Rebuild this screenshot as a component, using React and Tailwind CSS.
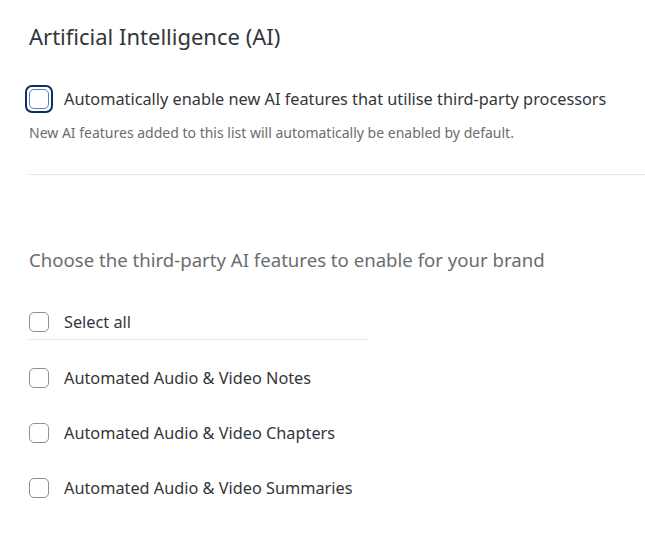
import React from "react";

const Box = ({ focused }) =>
  focused ? (
    <span className="flex h-[28px] w-[28px] shrink-0 items-center justify-center rounded-[7px] border-2 border-[#0b2f61] bg-white">
      <span className="block h-[20px] w-[20px] rounded-[5px] border border-[#5b7fb0] bg-white" />
    </span>
  ) : (
    <span className="block h-[20px] w-[20px] shrink-0 rounded-[5px] border border-[#89919a] bg-white" />
  );

const Option = ({ label, focused, className = "" }) => (
  <label className={`flex items-center ${className}`}>
    <span className={`flex w-[35px] items-center ${focused ? "-ml-[4px] w-[39px]" : ""}`}>
      <Box focused={focused} />
    </span>
    <span className="text-[16.3px] text-[#32363a]">{label}</span>
  </label>
);

const features = [
  "Automated Audio & Video Notes",
  "Automated Audio & Video Chapters",
  "Automated Audio & Video Summaries",
];

export default function App() {
  return (
    <div
      className="min-h-[539px] bg-white pl-[29px]"
      style={{ fontFamily: '"Noto Sans", "Open Sans", sans-serif' }}
    >
      <h1 className="pt-[21px] text-[22px] leading-[30px] text-[#32363a]">
        Artificial Intelligence (AI)
      </h1>
      <div className="mt-[34px] flex h-[28px] items-center">
        <Option
          focused
          label="Automatically enable new AI features that utilise third-party processors"
        />
      </div>
      <p className="mt-[10px] text-[14px] leading-[20px] text-[#6a6d70]">
        New AI features added to this list will automatically be enabled by default.
      </p>
      <div className="mt-[31px] border-t border-[#e5e5e5]" />
      <h2 className="mt-[71px] text-[18.6px] leading-[28px] text-[#6a6d70]">
        Choose the third-party AI features to enable for your brand
      </h2>
      <div className="mt-[36px] w-[339px] border-b border-[#e5e5e5] pb-[5px]">
        <Option label="Select all" className="h-[24px]" />
      </div>
      <div className="mt-[26px] flex flex-col gap-[31px]">
        {features.map((f) => (
          <Option key={f} label={f} className="h-[24px]" />
        ))}
      </div>
    </div>
  );
}
